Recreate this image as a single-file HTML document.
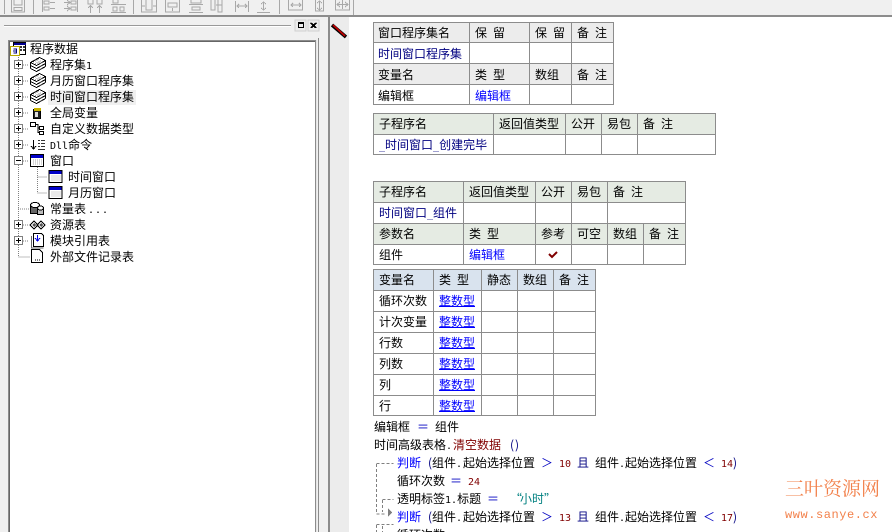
<!DOCTYPE html>
<html><head><meta charset="utf-8"><style>
html,body{margin:0;padding:0;background:#fff;width:892px;height:532px;overflow:hidden}
svg{display:block}
text{font-family:"WenQuanYi Zen Hei","Noto Sans CJK SC",sans-serif;font-size:12px;fill:#000}
.b{fill:#0000ff}.n{fill:#000080}.r{fill:#800000}.t{fill:#008080}.o{fill:#0000c0}
.m{font-family:"DejaVu Sans Mono","Liberation Mono",monospace;font-size:10px}
.g{stroke:#8c8c8c;stroke-width:2;fill:none}
.tb{stroke:#a8a8a8;stroke-width:1;fill:none}
.dot{stroke:#808080;stroke-width:1;stroke-dasharray:1 1;fill:none}
.dash{stroke:#808080;stroke-width:1;stroke-dasharray:3 2;fill:none}
</style></head><body>
<svg width="892" height="532" viewBox="0 0 892 532" xmlns="http://www.w3.org/2000/svg" shape-rendering="crispEdges">
<defs>
<g id="plus"><rect x="14.500" y="-4.500" width="8" height="8" fill="#fff" stroke="#808080"/><path d="M16 -.5h5M18.500 -3v5" stroke="#000" fill="none"/></g>
<g id="stack" fill="#fff" stroke="#000"><path d="M30.500 -2.500l9 -5 6 3 -9 5z"/><path d="M30.500 .5l6 3 9 -5M30.500 3.500l6 3 9 -5M30.500 -2.500v6M45.500 -4.500v6" fill="none"/><path d="M33 -3l6 -3M35 -1l6 -3M37 0l6 -3" stroke="#555" stroke-dasharray="1 1" fill="none"/></g>
<g id="win"><rect x="30.500" y="-6.500" width="13" height="12" fill="#fff" stroke="#000"/><rect x="31" y="-6" width="12" height="3" fill="#0000c8"/><path d="M33 -1h9M33 1h9M33 3h9" stroke="#aaa" stroke-dasharray="1 1" fill="none"/></g>
</defs>

<!-- backgrounds -->
<rect x="0" y="0" width="892" height="15" fill="#f0f0f0"/>
<rect x="0" y="15" width="328" height="517" fill="#f0f0f0"/>
<rect x="330" y="17" width="19" height="515" fill="#ececec"/>
<path d="M0 16h892" class="g"/>
<path d="M329 16v516" class="g"/>

<!-- toolbar -->
<g class="tb">
<path d="M4.500 0v14M33.500 0v14M133.500 0v14M279.500 0v14M353.500 0v15"/>
<path d="M11.500 0v12h13V0M14 0v5h8V0M14 7.500h8v3h-8z"/>
<path d="M42.500 0v12M44 1h5v3h-5zM44 7h5v3h-5zM50 2.500h5M50 8.500h5"/>
<path d="M64 2.500h6M64 8.500h6M71 1h5v3h-5zM71 7h5v3h-5zM77.500 0v12M67 0l3 2.500-3 2.500M67 6l3 2.500-3 2.500"/>
<path d="M88 0v4h5V0M97 0v4h5V0M90.500 6v7M99.500 6v7M88 8l2.500-2.500 2.500 2.500M97 8l2.500-2.500 2.500 2.500"/>
<path d="M113 0v3h5V0M111 4.500h15M113 7h4v4h-4zM120 7h4v4h-4zM111 12.500h15"/>
<path d="M141.500 0v12h15V0M146 0v10h6V0M142 6h3M153 6h3"/>
<path d="M165.500 0v12h14V0M168 3h9v4h-9zM172.500 8v3"/>
<path d="M191 0v3h10V0M189 4.500h14M192 7h8v3h-8zM189 12.500h14"/>
<path d="M211 0v10h4V0M218 0v12h4V0M216 5h6"/>
<path d="M235.500 1v11M248.500 1v11M237 6h10M239 4l-2 2 2 2M245 4l2 2-2 2"/>
<path d="M257 12.500h13M263.500 2v8M261 4l2.500-2 2.500 2M261 8l2.500 2 2.500-2"/>
<path d="M288.500 0v10h14V0M291 5h10M293 3l-2 2 2 2M299 3l2 2-2 2"/>
<path d="M315.500 0v11h8V0M319.500 1v9M317 3l2.500-2 2.500 2M317 8l2.500 2 2.500-2"/>
<path d="M335.500 0v10h14V0M337 4.500h11M342.500 0v9M340 2l-3 2.500 3 2.500M345 2l3 2.500-3 2.500"/>
</g>

<!-- dock title -->
<path d="M4 25.500h287" stroke="#999" fill="none"/>
<path d="M4 26.500h287" stroke="#fff" fill="none"/>
<rect x="295" y="20" width="11" height="11" fill="#ececec" stroke="#d0d0d0"/>
<rect x="298.500" y="22.500" width="5" height="5" fill="none" stroke="#000"/><path d="M298 23.500h6" stroke="#000"/>
<rect x="308" y="20" width="11" height="11" fill="#ececec" stroke="#d0d0d0"/>
<path d="M310.500 23l5 5M315.500 23l-5 5M311.500 23l5 5M316.500 23l-5 5" stroke="#000"/>

<!-- tree box -->
<rect x="9" y="41" width="307" height="491" fill="#fff"/>
<path d="M8.500 532V40.500H316" stroke="#8c8c8c" fill="none"/>
<path d="M9.500 532V41.500H315" stroke="#666" fill="none"/>
<path d="M315.500 41v491" stroke="#8c8c8c" fill="none"/>
<path d="M316.500 40v492" stroke="#e4e4e4" fill="none"/>
<path d="M318.500 38v494" stroke="#8c8c8c" fill="none"/>

<!-- tree lines -->
<path d="M18.500 55v202M18.500 257h12M23 65h6M23 81h6M23 97h6M23 113h6M23 129h6M23 145h6M23 161h6M23 225h6M23 241h6M18 209h11M37.500 167v26M37.500 177h10M37.500 193h10" class="dot"/>

<!-- root icon -->
<rect x="13.500" y="42.500" width="12" height="12" fill="#fff" stroke="#000"/>
<rect x="14" y="43" width="12" height="2" fill="#000090"/>
<path d="M20 46h2v2h-2zM23 46h2v2h-2zM20 49h2v2h-2zM23 49h2v2h-2z" fill="#333"/>
<rect x="10.500" y="46.500" width="9" height="9" fill="#fff" stroke="#b8a800"/>
<path d="M13 51h4M13.500 49h3v4h-3" stroke="#000080" fill="none"/>

<use href="#plus" y="65"/><use href="#stack" y="65"/>
<use href="#plus" y="81"/><use href="#stack" y="81"/>
<use href="#plus" y="97"/><use href="#stack" y="97"/>
<use href="#plus" y="113"/>
<rect x="33.500" y="109.500" width="7" height="9" fill="#222" stroke="#000"/><rect x="34" y="108" width="7" height="3" fill="#c8b400"/><rect x="35" y="112" width="3" height="5" fill="#ddd"/>
<use href="#plus" y="129"/>
<path d="M30.500 122.500h5v4h-5zM39.500 126.500h4v3h-4zM39.500 131.500h4v3h-4z" fill="#fff" stroke="#000"/><path d="M36 124.500h2v8h1M38 128h1" fill="none" stroke="#000"/>
<use href="#plus" y="145"/>
<path d="M33.500 140v9M31 146l2.500 3 2.500-3" stroke="#000" fill="none"/><path d="M38 140.500h2M41 140.500h4M38 143.500h2M41 143.500h4M38 146.500h2M41 146.500h4M38 149.500h7" stroke="#333" fill="none"/>
<rect x="14.500" y="156.500" width="8" height="8" fill="#fff" stroke="#808080"/><path d="M16 160.500h5" stroke="#000"/>
<use href="#win" y="161"/>
<use href="#win" x="18.500" y="177"/><use href="#win" x="18.500" y="193"/>
<path d="M30.500 205.500h9v8h-9z" fill="#666" stroke="#000"/><ellipse cx="35" cy="205" rx="4.500" ry="2.500" fill="#fff" stroke="#000"/>
<path d="M37.500 208.500h6v6h-6z" fill="#bbb" stroke="#000"/><ellipse cx="40.500" cy="208" rx="3" ry="2" fill="#fff" stroke="#000"/>
<use href="#plus" y="225"/>
<path d="M30 225l4-4 4 4-4 4zM37 225l4-4 4 4-4 4z" fill="#fff" stroke="#000"/><path d="M32 225l2-2 2 2-2 2zM39 225l2-2 2 2-2 2z" fill="#555"/>
<use href="#plus" y="241"/>
<path d="M33.500 233.500h8l2 2v11h-10z" fill="#fff" stroke="#000"/><path d="M31.500 236v12h12" stroke="#666" fill="none"/><path d="M37.500 235v5M35 238l2.500 3 2.500-3" stroke="#0000e0" fill="none"/>
<path d="M31.500 249.500h8l3 3v10h-11z" fill="#fff" stroke="#000"/><path d="M35 260h1M37 260h1M39 260h1" stroke="#000"/>

<text x="30" y="53" >程序数据</text>
<text x="50" y="69">程序集<tspan class="m">1</tspan></text>
<text x="50" y="85">月历窗口程序集</text>
<rect x="48" y="90" width="88" height="15" fill="#f0f0f0"/>
<text x="50" y="101">时间窗口程序集</text>
<text x="50" y="117">全局变量</text>
<text x="50" y="133">自定义数据类型</text>
<text x="50" y="149"><tspan class="m">Dll</tspan>命令</text>
<text x="50" y="165">窗口</text>
<text x="68" y="181">时间窗口</text>
<text x="68" y="197">月历窗口</text>
<text x="50" y="213">常量表<tspan class="m" dx="2" letter-spacing="1">...</tspan></text>
<text x="50" y="229">资源表</text>
<text x="50" y="245">模块引用表</text>
<text x="50" y="261">外部文件记录表</text>

<!-- pencil -->
<path d="M332 25l14 12" stroke="#000" stroke-width="3.500" shape-rendering="auto"/>
<path d="M333 25l12 11" stroke="#c00000" stroke-width="1.800" shape-rendering="auto"/>

<!-- table 1 -->
<rect x="373" y="22" width="240" height="21" fill="#ececec"/>
<rect x="373" y="64" width="240" height="21" fill="#ececec"/>
<path d="M373 42.500h241M373 63.500h241M373 84.500h241M469.500 22v82M529.500 22v82M571.500 22v82" stroke="#8c8c8c" fill="none"/>
<rect x="373.500" y="22.500" width="240" height="82" fill="none" stroke="#8c8c8c"/>
<text x="378" y="37">窗口程序集名</text><text x="475" y="37">保</text><text x="493" y="37">留</text><text x="535" y="37">保</text><text x="553" y="37">留</text><text x="577" y="37">备</text><text x="595" y="37">注</text>
<text x="378" y="58" class="n">时间窗口程序集</text>
<text x="378" y="79">变量名</text><text x="475" y="79">类</text><text x="493" y="79">型</text><text x="535" y="79">数组</text><text x="577" y="79">备</text><text x="595" y="79">注</text>
<text x="378" y="100">编辑框</text><text x="475" y="100" class="b">编辑框</text>

<!-- table 2 -->
<rect x="373" y="113" width="343" height="21" fill="#e5ebe3"/>
<path d="M373 134.500h343M493.500 113v41M565.500 113v41M601.500 113v41M637.500 113v41" stroke="#8c8c8c" fill="none"/>
<rect x="373.500" y="113.500" width="342" height="41" fill="none" stroke="#8c8c8c"/>
<text x="379" y="128">子程序名</text><text x="499" y="128">返回值类型</text><text x="571" y="128">公开</text><text x="607" y="128">易包</text><text x="643" y="128">备</text><text x="661" y="128">注</text>
<text x="379" y="149" class="n"><tspan class="m">_</tspan>时间窗口<tspan class="m">_</tspan>创建完毕</text>

<!-- table 3 -->
<rect x="373" y="181" width="312" height="21" fill="#e5ebe3"/>
<rect x="373" y="223" width="312" height="21" fill="#e5ebe3"/>
<path d="M373 202.500h312M373 223.500h312M373 244.500h312M463.500 181v83M535.500 181v83M571.500 181v83M607.500 181v83M643.500 223v41" stroke="#8c8c8c" fill="none"/>
<rect x="373.500" y="181.500" width="312" height="83" fill="none" stroke="#8c8c8c"/>
<text x="379" y="196">子程序名</text><text x="469" y="196">返回值类型</text><text x="541" y="196">公开</text><text x="577" y="196">易包</text><text x="613" y="196">备</text><text x="631" y="196">注</text>
<text x="379" y="217" class="n">时间窗口<tspan class="m">_</tspan>组件</text>
<text x="379" y="238">参数名</text><text x="469" y="238">类</text><text x="487" y="238">型</text><text x="541" y="238">参考</text><text x="577" y="238">可空</text><text x="613" y="238">数组</text><text x="649" y="238">备</text><text x="667" y="238">注</text>
<text x="379" y="259">组件</text><text x="469" y="259" class="b">编辑框</text>
<path d="M549 254l3 3 5-5" stroke="#800000" stroke-width="2" fill="none" shape-rendering="auto"/>

<!-- table 4 -->
<rect x="373" y="269" width="222" height="21" fill="#d9e3ee"/>
<path d="M373 290.500h222M373 311.500h222M373 332.500h222M373 353.500h222M373 374.500h222M373 395.500h222M433.500 269v146M481.500 269v146M517.500 269v146M553.500 269v146" stroke="#8c8c8c" fill="none"/>
<rect x="373.500" y="269.500" width="222" height="146" fill="none" stroke="#8c8c8c"/>
<text x="379" y="284">变量名</text><text x="439" y="284">类</text><text x="457" y="284">型</text><text x="487" y="284">静态</text><text x="523" y="284">数组</text><text x="559" y="284">备</text><text x="577" y="284">注</text>
<text x="379" y="305">循环次数</text><text x="379" y="326">计次变量</text><text x="379" y="347">行数</text><text x="379" y="368">列数</text><text x="379" y="389">列</text><text x="379" y="410">行</text>
<text x="439" y="305" class="b">整数型</text><text x="439" y="326" class="b">整数型</text><text x="439" y="347" class="b">整数型</text><text x="439" y="368" class="b">整数型</text><text x="439" y="389" class="b">整数型</text><text x="439" y="410" class="b">整数型</text>
<path d="M439 306.500h36M439 327.500h36M439 348.500h36M439 369.500h36M439 390.500h36M439 411.500h36" stroke="#0000ff" fill="none"/>

<!-- code -->
<text x="374" y="431">编辑框</text><text x="417" y="431" class="o">＝</text><text x="435" y="431">组件</text>
<text x="374" y="449">时间高级表格<tspan class="m">.</tspan></text><text x="453" y="449" class="r">清空数据</text><text x="510" y="449" class="n" letter-spacing="1">()</text>

<path d="M376.500 463.500h17M376.500 464v50M376.500 514h8" class="dash"/>
<path d="M382.500 499.500h11M382.500 500v12M376.500 524.500h17M376.500 525v7M382.500 526v6" class="dash"/>
<path d="M388 508v9l4-4.500z" fill="#808080"/>

<text x="397" y="467" class="b">判断</text><text x="428" y="467" class="n">(</text><text x="432" y="467">组件<tspan class="m">.</tspan></text><text x="463" y="467">起始选择位置</text><text x="541" y="467" class="o">＞</text><text x="559" y="467" class="m r">10</text><text x="577" y="467" class="n">且</text><text x="595" y="467">组件<tspan class="m">.</tspan></text><text x="625" y="467">起始选择位置</text><text x="703" y="467" class="o">＜</text><text x="721" y="467" class="m r">14</text><text x="733" y="467" class="n">)</text>
<text x="397" y="485">循环次数</text><text x="450" y="485" class="o">＝</text><text x="468" y="485" class="m r">24</text>
<text x="397" y="503">透明标签<tspan class="m">1.</tspan>标题</text><text x="487" y="503" class="o">＝</text><text x="510 520 532 544" y="503" class="t">“小时”</text>
<text x="397" y="521" class="b">判断</text><text x="428" y="521" class="n">(</text><text x="432" y="521">组件<tspan class="m">.</tspan></text><text x="463" y="521">起始选择位置</text><text x="541" y="521" class="o">＞</text><text x="559" y="521" class="m r">13</text><text x="577" y="521" class="n">且</text><text x="595" y="521">组件<tspan class="m">.</tspan></text><text x="625" y="521">起始选择位置</text><text x="703" y="521" class="o">＜</text><text x="721" y="521" class="m r">17</text><text x="733" y="521" class="n">)</text>
<text x="397" y="539">循环次数</text><text x="450" y="539" class="o">＝</text><text x="468" y="539" class="m r">36</text>

<!-- watermark -->
<text x="785" y="495" style="font-family:'Noto Serif CJK SC',serif;font-size:19px;fill:#f2804a">三叶资源网</text>
<text x="785" y="518" style="font-family:'Liberation Mono',monospace;font-size:12px;letter-spacing:.55px;fill:#f2804a">www.sanye.cx</text>
</svg>
</body></html>
